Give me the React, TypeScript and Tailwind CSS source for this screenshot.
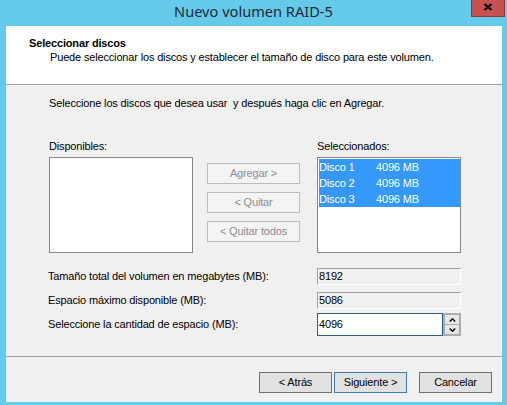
import type { ReactNode } from "react"

function SideButton({ children }: { children: ReactNode }) {
  return (
    <button
      disabled
      className="w-[93px] h-[21px] border border-[#bcbcbc] bg-[#f4f4f4] text-[#8d8d8d] flex items-center justify-center"
    >
      {children}
    </button>
  )
}

function WizardButton({ children, primary = false }: { children: ReactNode; primary?: boolean }) {
  return (
    <button
      className={
        primary
          ? "w-[73px] h-[21px] border border-[#3c7fb1] bg-[#e1e1e1] flex items-center justify-center"
          : "w-[73px] h-[21px] border border-[#707070] bg-[#e1e1e1] flex items-center justify-center"
      }
    >
      {children}
    </button>
  )
}

function ReadOnlyField({ label, value }: { label: string; value: string }) {
  return (
    <div className="flex items-center h-[17px]">
      <div className="w-[269px]">{label}</div>
      <div className="w-[144px] h-[17px] border-t border-l border-[#a0a0a0] border-b border-r border-b-white border-r-white bg-[#f0f0f0] flex items-center pl-[1px]">
        {value}
      </div>
    </div>
  )
}

const selected = ["Disco 1", "Disco 2", "Disco 3"]

export default function App() {
  return (
    <div className="w-[507px] h-[405px] bg-[#65c9e9] flex flex-col font-['Liberation_Sans',Arial,sans-serif] text-[11px] leading-[13px] tracking-[-0.16px] text-black">
      {/* title bar */}
      <div className="relative h-[26px] shrink-0 flex items-center justify-center">
        <span className="font-['Noto_Sans',sans-serif] text-[14.6px] leading-[20px] tracking-normal text-[#1d2a39] pb-[4px]">
          Nuevo volumen RAID-5
        </span>
        <button className="absolute top-0 right-[2px] w-[34px] h-[17px] bg-[#c75050] border border-t-0 border-[#8c3a36] flex items-center justify-center">
          <svg width="10" height="8" viewBox="0 0 10 8" className="mb-[3px]">
            <path d="M1.5 1 L8.5 7 M8.5 1 L1.5 7" stroke="#000" strokeWidth="2.2" />
          </svg>
        </button>
      </div>

      <div className="flex-1 ml-[6px] mr-[5px] mb-[3px] bg-[#f0f0f0] flex flex-col">
        {/* header */}
        <div className="h-[59px] shrink-0 bg-white border-b border-[#a0a0a0] pt-[11px] pl-[23px]">
          <div className="font-bold">Seleccionar discos</div>
          <div className="mt-[1px] pl-[21px]">
            Puede seleccionar los discos y establecer el tamaño de disco para este volumen.
          </div>
        </div>

        {/* body */}
        <div className="pl-[42px] flex flex-col">
          <div className="mt-[12px] ml-[1px] whitespace-pre">
            Seleccione los discos que desea usar  y después haga clic en Agregar.
          </div>

          <div className="mt-[30px] ml-[1px] flex">
            <div className="w-[144px] flex flex-col">
              <div>Disponibles:</div>
              <div className="mt-[4px] h-[96px] border border-[#828790] bg-white" />
            </div>

            <div className="ml-[14px] mt-[23px] flex flex-col gap-[8px]">
              <SideButton>Agregar &gt;</SideButton>
              <SideButton>&lt; Quitar</SideButton>
              <SideButton>&lt; Quitar todos</SideButton>
            </div>

            <div className="ml-[17px] w-[144px] flex flex-col">
              <div>Seleccionados:</div>
              <div className="mt-[4px] h-[96px] border border-[#828790] bg-white pt-[1px] pl-[1px]">
                {selected.map((name) => (
                  <div key={name} className="h-[16px] leading-[16px] bg-[#3399ff] text-white flex">
                    <span className="w-[57px]">{name}</span>
                    <span>4096 MB</span>
                  </div>
                ))}
              </div>
            </div>
          </div>

          <div className="mt-[15px] flex flex-col">
            <ReadOnlyField label="Tamaño total del volumen en megabytes (MB):" value="8192" />
            <div className="mt-[7px]">
              <ReadOnlyField label="Espacio máximo disponible (MB):" value="5086" />
            </div>
            <div className="mt-[4px] flex items-center h-[23px]">
              <div className="w-[269px]">Seleccione la cantidad de espacio (MB):</div>
              <div className="w-[126px] h-[23px] border border-[#2f5d8a] bg-white flex items-center pl-[1px]">
                4096
              </div>
              <div className="w-[18px] h-[23px] bg-[#acacac] p-[2px] flex flex-col gap-[1px]">
                <div className="flex-1 bg-[#e6e6e6] flex items-center justify-center">
                  <svg width="7" height="4" viewBox="0 0 7 4">
                    <path d="M0.8 3.5 L3.5 0.8 L6.2 3.5" stroke="#000" strokeWidth="1.4" fill="none" />
                  </svg>
                </div>
                <div className="flex-1 bg-[#e6e6e6] flex items-center justify-center">
                  <svg width="7" height="4" viewBox="0 0 7 4">
                    <path d="M0.8 0.5 L3.5 3.2 L6.2 0.5" stroke="#000" strokeWidth="1.4" fill="none" />
                  </svg>
                </div>
              </div>
            </div>
          </div>
        </div>

        {/* footer */}
        <div className="mt-[20px] border-t border-[#a0a0a0]" />
        <div className="mt-[15px] flex justify-end pr-[10px]">
          <WizardButton>&lt; Atrás</WizardButton>
          <div className="ml-[2px]">
            <WizardButton primary>Siguiente &gt;</WizardButton>
          </div>
          <div className="ml-[12px]">
            <WizardButton>Cancelar</WizardButton>
          </div>
        </div>
      </div>
    </div>
  )
}
